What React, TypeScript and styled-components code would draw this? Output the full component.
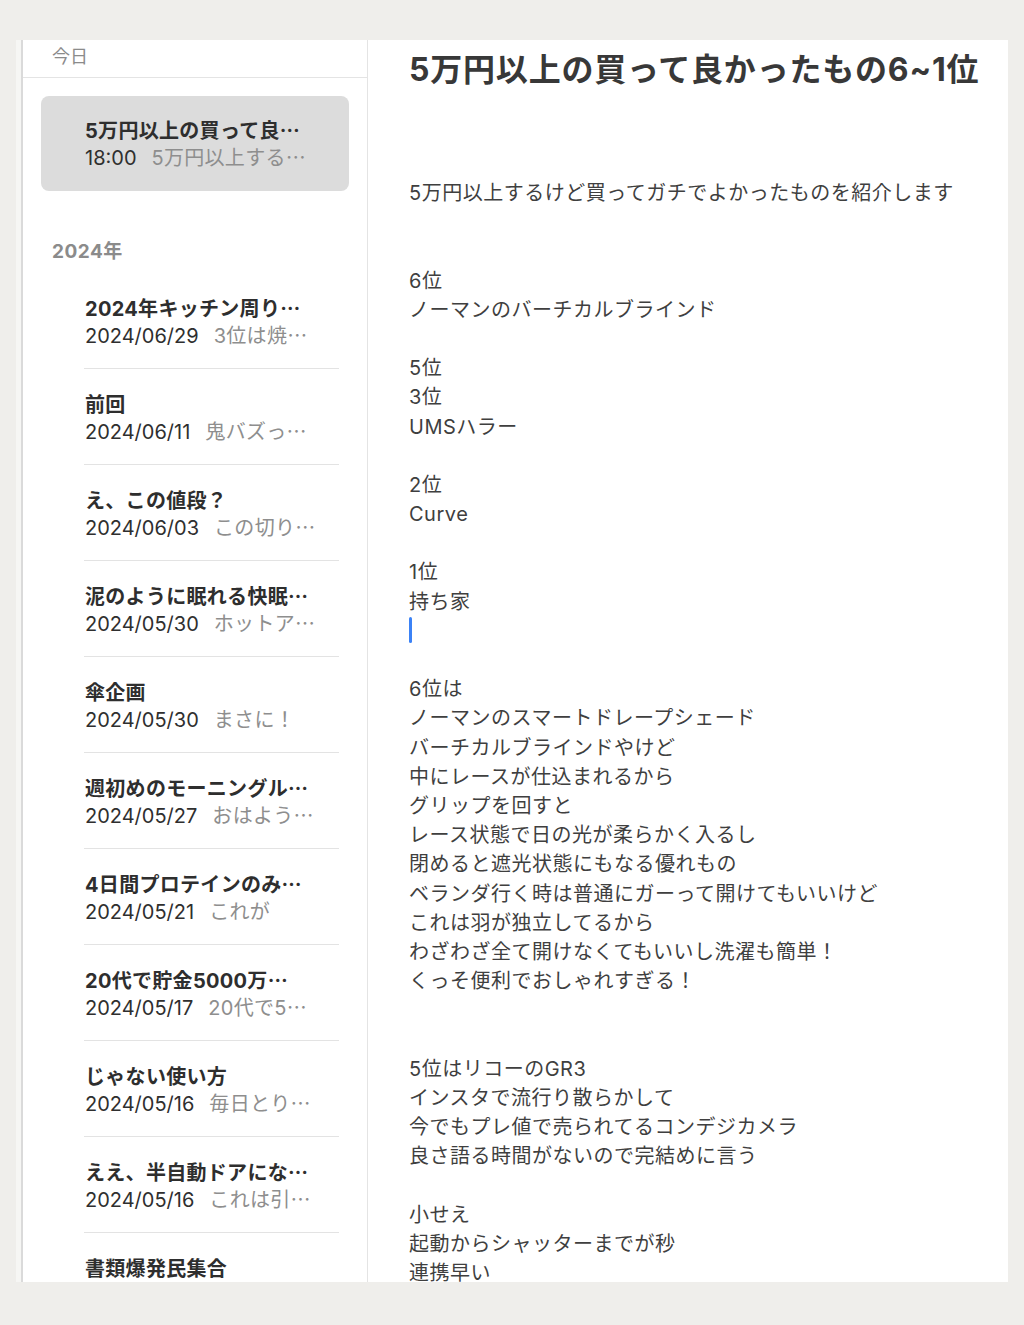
import * as React from 'react';
import styled, { createGlobalStyle } from 'styled-components';

const GlobalStyle = createGlobalStyle`
  html, body {
    margin: 0;
    padding: 0;
    background: #efeeeb;
  }
  body {
    font-family: Inter, "Noto Sans CJK JP", "Noto Sans", sans-serif;
    -webkit-font-smoothing: antialiased;
  }
`;

type Note = {
    title: string,
    date: string,
    preview?: string
}

const notes: Note[] = [
    { title: '2024年キッチン周り…', date: '2024/06/29', preview: '3位は焼…' },
    { title: '前回', date: '2024/06/11', preview: '鬼バズっ…' },
    { title: 'え、この値段？', date: '2024/06/03', preview: 'この切り…' },
    { title: '泥のように眠れる快眠…', date: '2024/05/30', preview: 'ホットア…' },
    { title: '傘企画', date: '2024/05/30', preview: 'まさに！' },
    { title: '週初めのモーニングル…', date: '2024/05/27', preview: 'おはよう…' },
    { title: '4日間プロテインのみ…', date: '2024/05/21', preview: 'これが' },
    { title: '20代で貯金5000万…', date: '2024/05/17', preview: '20代で5…' },
    { title: 'じゃない使い方', date: '2024/05/16', preview: '毎日とり…' },
    { title: 'ええ、半自動ドアにな…', date: '2024/05/16', preview: 'これは引…' },
    { title: '書類爆発民集合', date: '' },
];

// "|" marks the line holding the caret
const body = [
    '5万円以上するけど買ってガチでよかったものを紹介します',
    '',
    '',
    '6位',
    'ノーマンのバーチカルブラインド',
    '',
    '5位',
    '3位',
    'UMSハラー',
    '',
    '2位',
    'Curve',
    '',
    '1位',
    '持ち家',
    '|',
    '',
    '6位は',
    'ノーマンのスマートドレープシェード',
    'バーチカルブラインドやけど',
    '中にレースが仕込まれるから',
    'グリップを回すと',
    'レース状態で日の光が柔らかく入るし',
    '閉めると遮光状態にもなる優れもの',
    'ベランダ行く時は普通にガーって開けてもいいけど',
    'これは羽が独立してるから',
    'わざわざ全て開けなくてもいいし洗濯も簡単！',
    'くっそ便利でおしゃれすぎる！',
    '',
    '',
    '5位はリコーのGR3',
    'インスタで流行り散らかして',
    '今でもプレ値で売られてるコンデジカメラ',
    '良さ語る時間がないので完結めに言う',
    '',
    '小せえ',
    '起動からシャッターまでが秒',
    '連携早い',
];

const Page = styled.div`
  padding: 40px 16px 43px;
`;

const Panel = styled.div`
  display: flex;
  height: 1242px;
  background: #ffffff;
  border-left: 5px solid #f6f6f4;
  overflow: hidden;
`;

const Sidebar = styled.aside`
  width: 344px;
  flex-shrink: 0;
  border-left: 2px solid #dadada;
  border-right: 1px solid #e4e4e4;
  overflow: hidden;
`;

const TodayHeader = styled.div`
  padding: 6px 0 9px 29px;
  font-size: 18px;
  line-height: 22px;
  color: #8b8b8b;
  border-bottom: 1px solid #e4e4e4;
`;

const SelectedCard = styled.div`
  margin: 18px 18px 0 18px;
  height: 95px;
  box-sizing: border-box;
  padding: 22px 0 0 44px;
  background: #dcdcdc;
  border-radius: 8px;
`;

const YearHeader = styled.div`
  margin: 49px 0 9px 29px;
  font-size: 19px;
  line-height: 24px;
  font-weight: 700;
  color: #8b8b8b;
  letter-spacing: 0.5px;
`;

const NoteRow = styled.div<{ $last?: boolean }>`
  margin: 0 28px 0 61px;
  padding: 23px 0 18px 1px;
  border-bottom: ${p => (p.$last ? 'none' : '1px solid #e3e3e3')};
`;

const NoteTitle = styled.div`
  height: 27px;
  font-size: 20px;
  line-height: 27px;
  font-weight: 700;
  color: #2e2e2e;
  letter-spacing: 0.3px;
  white-space: nowrap;
`;

const NoteMeta = styled.div`
  display: flex;
  gap: 15px;
  height: 27px;
  font-size: 20px;
  line-height: 27px;
  white-space: nowrap;
`;

const NoteDate = styled.span`
  color: #2f2f2f;
`;

const NotePreview = styled.span`
  color: #8e8e8e;
  letter-spacing: 0.3px;
`;

// the cut-off mark sits on the middle of the line, as in Japanese fonts
const Dots = styled.span`
  font-family: "Noto Sans CJK JP", sans-serif;
  line-height: 1;
  letter-spacing: 0;
`;

const Editor = styled.main`
  flex: 1;
  padding-left: 41px;
  overflow: hidden;
`;

const Title = styled.h1`
  margin: 10px 0 0 0;
  font-size: 32px;
  line-height: 40px;
  font-weight: 700;
  color: #383838;
  letter-spacing: 0.8px;
  white-space: nowrap;
`;

const Body = styled.div`
  margin-top: 89px;
`;

const Line = styled.div`
  height: 29.2px;
  font-size: 20px;
  line-height: 29.2px;
  color: #3f3f3f;
  letter-spacing: 0.5px;
  white-space: nowrap;
`;

const Caret = styled.span`
  display: inline-block;
  width: 3px;
  height: 26px;
  border-radius: 2px;
  background: #3b82f6;
  vertical-align: top;
`;

function Clip({ text }: { text?: string }) {
    if (!text || !text.endsWith('…')) return <>{text}</>;
    return <>{text.slice(0, -1)}<Dots>…</Dots></>;
}

function NoteItem({ note, last }: { note: Note, last?: boolean }) {
    return (
        <NoteRow $last={last}>
            <NoteTitle><Clip text={note.title} /></NoteTitle>
            {note.date && (
                <NoteMeta>
                    <NoteDate>{note.date}</NoteDate>
                    <NotePreview><Clip text={note.preview} /></NotePreview>
                </NoteMeta>
            )}
        </NoteRow>
    );
}

export default function App() {
    return (
        <Page>
            <GlobalStyle />
            <Panel>
                <Sidebar>
                    <TodayHeader>今日</TodayHeader>
                    <SelectedCard>
                        <NoteTitle><Clip text="5万円以上の買って良…" /></NoteTitle>
                        <NoteMeta>
                            <NoteDate>18:00</NoteDate>
                            <NotePreview><Clip text="5万円以上する…" /></NotePreview>
                        </NoteMeta>
                    </SelectedCard>
                    <YearHeader>2024年</YearHeader>
                    {notes.map((n, i) => (
                        <NoteItem key={i} note={n} last={i === notes.length - 1} />
                    ))}
                </Sidebar>
                <Editor>
                    <Title>5万円以上の買って良かったもの6~1位</Title>
                    <Body>
                        {body.map((l, i) => (
                            <Line key={i}>{l === '|' ? <Caret /> : l}</Line>
                        ))}
                    </Body>
                </Editor>
            </Panel>
        </Page>
    );
}
